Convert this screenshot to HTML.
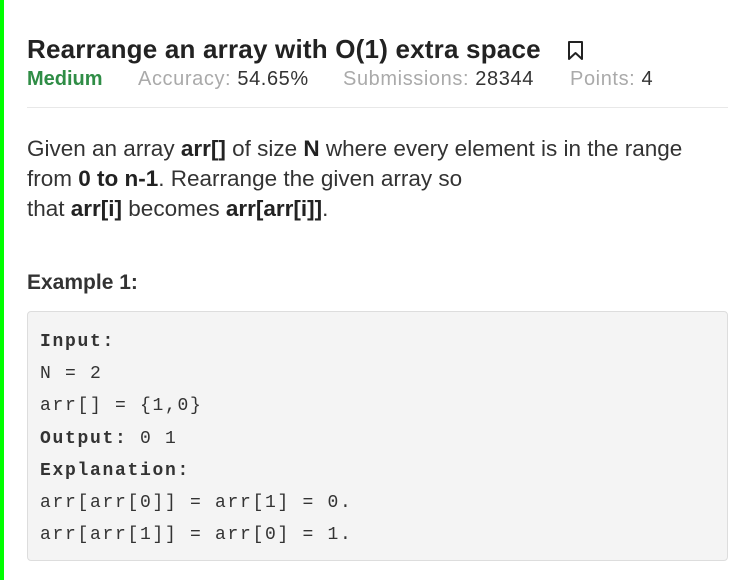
<!DOCTYPE html>
<html><head><style>
body{margin:0;width:745px;height:580px;background:#fff;position:relative;overflow:hidden;font-family:"Liberation Sans",sans-serif;color:#222}
.bar{position:absolute;left:0;top:0;width:4px;height:580px;background:#00ff00}
.t{position:absolute;left:27px;top:34px;font-size:26px;font-weight:bold;color:#222;white-space:nowrap;letter-spacing:0.2px}
.m{position:absolute;top:68px;font-size:20px;white-space:nowrap;color:#aaa;letter-spacing:0.6px}
.m span{color:#333}
.hr{position:absolute;left:27px;top:107px;width:701px;height:1px;background:#e8e8e8}
.p{position:absolute;left:27px;top:134px;font-size:22.5px;line-height:30px;color:#333;letter-spacing:0px;white-space:nowrap}
.p b{color:#222}
.e{position:absolute;left:27px;top:271px;font-size:21px;font-weight:bold;color:#333;letter-spacing:0px}
.code{position:absolute;left:27px;top:311px;width:699px;height:248px;background:#f4f4f4;border:1px solid #ddd;border-radius:4px}
.code pre{margin:0;position:absolute;left:12px;top:14px;font-family:"Liberation Mono",monospace;font-size:18px;line-height:32.2px;letter-spacing:1.7px;color:#333}
</style></head><body>
<div class="bar"></div>
<div class="t">Rearrange an array with O(1) extra space</div>
<svg style="position:absolute;left:567px;top:40px" width="17" height="21" viewBox="0 0 17 21"><path d="M2 2H15V19L8.5 13L2 19Z" fill="none" stroke="#222" stroke-width="2" stroke-linejoin="round"/></svg>
<div class="m" style="left:27px;color:#2f8d46;font-weight:bold;letter-spacing:0">Medium</div>
<div class="m" style="left:138px">Accuracy: <span>54.65%</span></div>
<div class="m" style="left:343px">Submissions: <span>28344</span></div>
<div class="m" style="left:570px">Points: <span>4</span></div>
<div class="hr"></div>
<div class="p">Given an array <b>arr[]</b> of size <b>N</b> where every element is in the range<br>from <b>0 to n-1</b>. Rearrange the given array so<br>that <b>arr[i]</b> becomes <b>arr[arr[i]]</b>.</div>
<div class="e">Example 1:</div>
<div class="code"><pre><b>Input:</b>
N = 2
arr[] = {1,0}
<b>Output:</b> 0 1
<b>Explanation:</b>
arr[arr[0]] = arr[1] = 0.
arr[arr[1]] = arr[0] = 1.</pre></div>
</body></html>
